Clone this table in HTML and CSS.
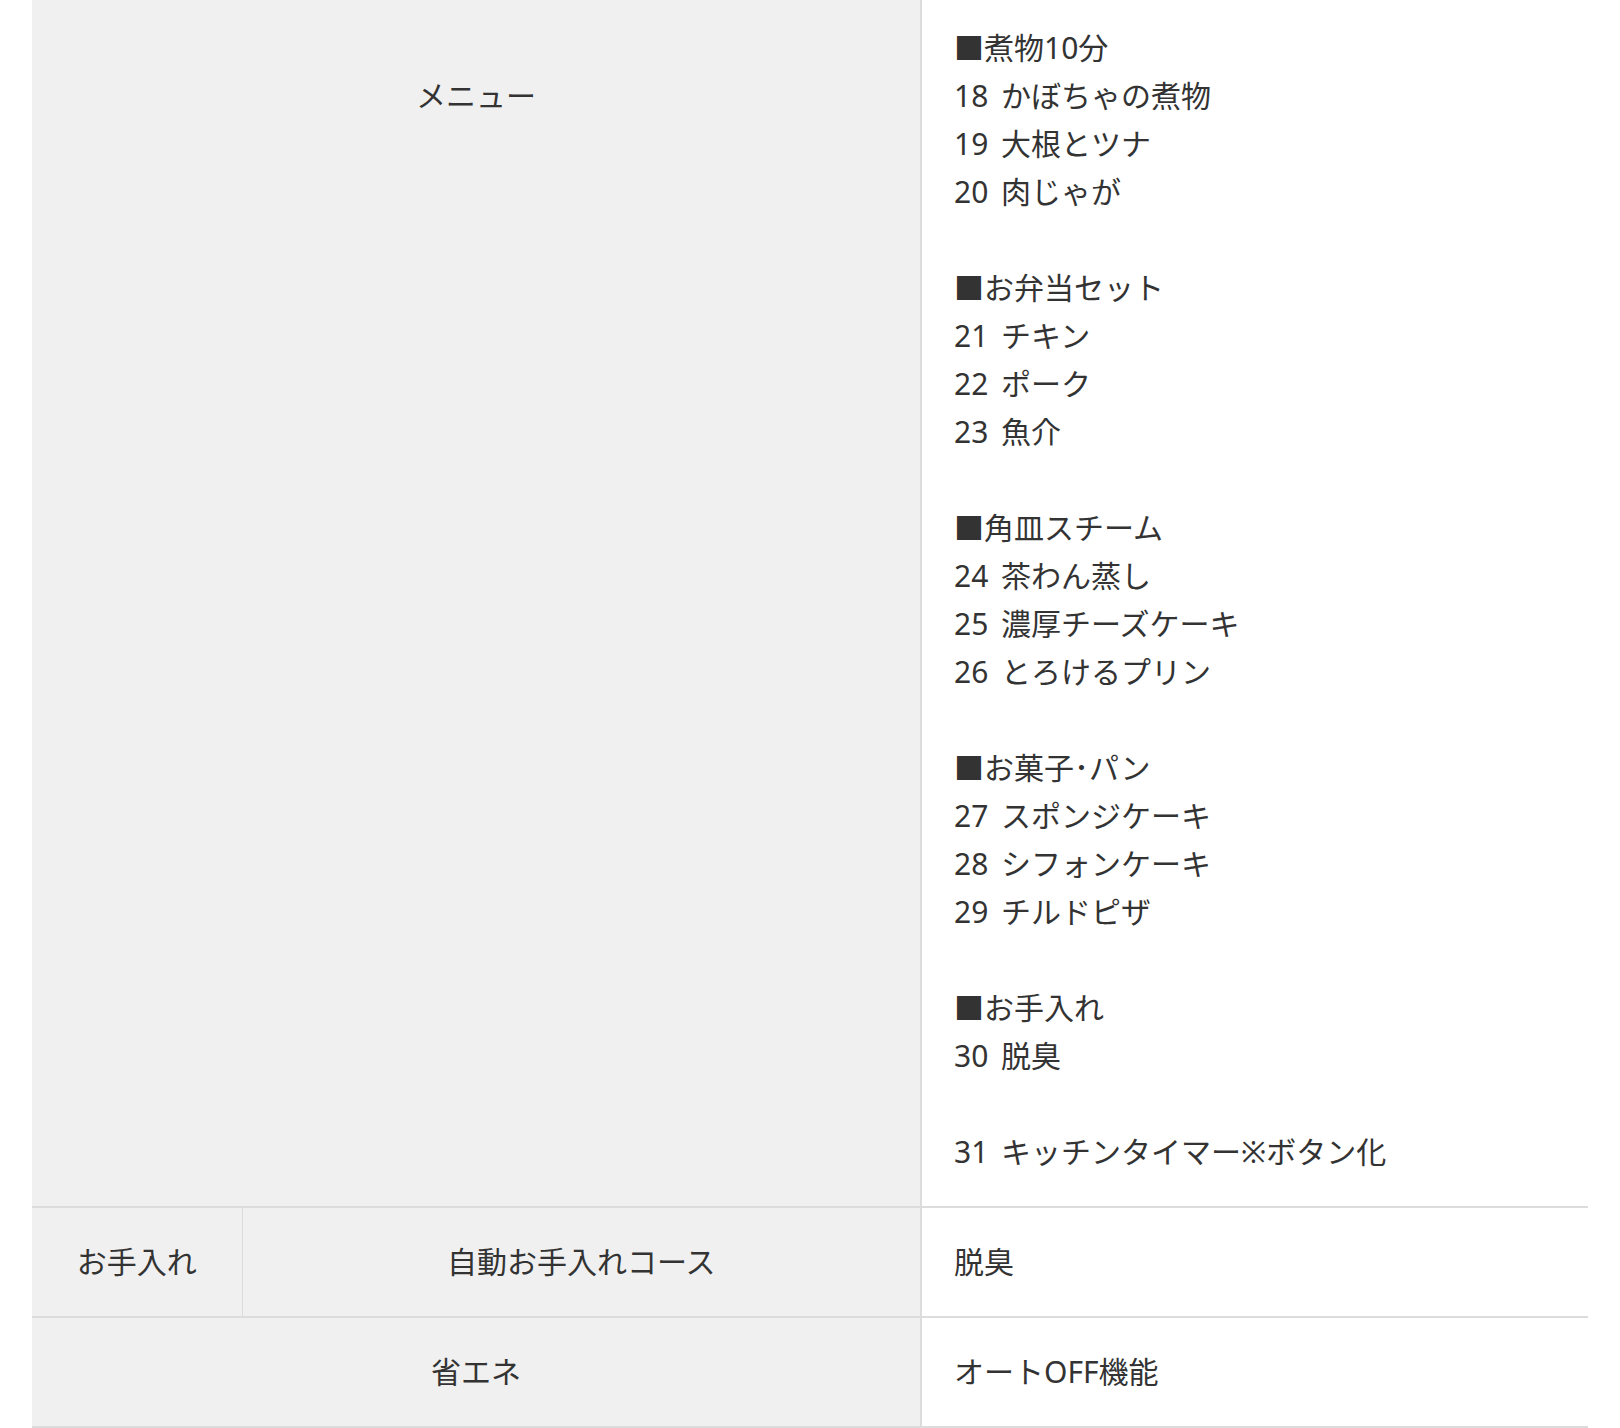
FILE: index.html
```html
<!DOCTYPE html>
<html lang="ja">
<head>
    <meta charset="UTF-8">
    <meta name="viewport" content="width=device-width, initial-scale=1.0">
    <title>仕様</title>
    <link rel="stylesheet" href="styles.css">
</head>
<body>
    <div class="spec">
        <table class="spec-table">
            <colgroup>
                <col class="col-group">
                <col class="col-name">
                <col class="col-value">
            </colgroup>
            <tr>
                <th colspan="2" class="spec-head spec-head-top">メニュー</th>
                <td class="spec-value">
                    ■煮物10分<br>
                    18 かぼちゃの煮物<br>
                    19 大根とツナ<br>
                    20 肉じゃが<br>
                    <br>
                    ■お弁当セット<br>
                    21 チキン<br>
                    22 ポーク<br>
                    23 魚介<br>
                    <br>
                    ■角皿スチーム<br>
                    24 茶わん蒸し<br>
                    25 濃厚チーズケーキ<br>
                    26 とろけるプリン<br>
                    <br>
                    ■お菓子･パン<br>
                    27 スポンジケーキ<br>
                    28 シフォンケーキ<br>
                    29 チルドピザ<br>
                    <br>
                    ■お手入れ<br>
                    30 脱臭<br>
                    <br>
                    31 キッチンタイマー※ボタン化
                </td>
            </tr>
            <tr>
                <th class="spec-head spec-head-group">お手入れ</th>
                <th class="spec-head">自動お手入れコース</th>
                <td class="spec-value">脱臭</td>
            </tr>
            <tr>
                <th colspan="2" class="spec-head">省エネ</th>
                <td class="spec-value">オートOFF機能</td>
            </tr>
        </table>
    </div>
</body>
</html>
```

FILE: styles.css
```css
body {
    margin: 0;
    padding: 0;
    background-color: #fff;
    color: #333;
    font-family: "Noto Sans", "Noto Sans CJK JP", sans-serif;
}
.spec {
    padding: 0 32px;
}
.spec-table {
    width: 100%;
    margin-top: -6px;
    border-collapse: collapse;
    table-layout: fixed;
    font-size: 30px;
    line-height: 48px;
    word-spacing: 5px;
}
.col-group {
    width: 210px;
}
.col-name {
    width: 679px;
}
.spec-table th,
.spec-table td {
    padding: 30px 32px;
    border-bottom: 2px solid #dcdcdc;
    font-weight: normal;
}
.spec-head {
    background-color: #f0f0f0;
    text-align: center;
    vertical-align: middle;
}
.spec-head-top {
    vertical-align: top;
    padding-top: 78px !important;
}
.spec-head-group {
    border-right: 1px solid #dcdcdc;
    padding-left: 0 !important;
    padding-right: 0 !important;
}
.spec-value {
    text-align: left;
    vertical-align: top;
    border-left: 2px solid #dcdcdc;
}
```
